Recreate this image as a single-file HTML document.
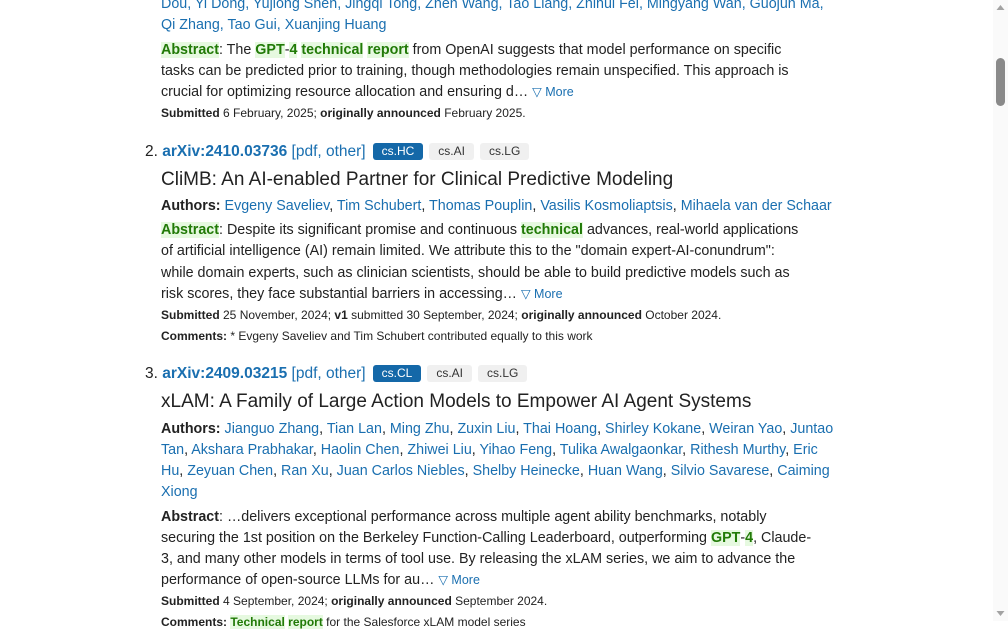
<!DOCTYPE html>
<html><head><meta charset="utf-8"><style>
html,body{margin:0;padding:0;width:1008px;height:621px;overflow:hidden;background:#fff;font-family:"Liberation Sans",sans-serif;color:#222}
.l{position:absolute;left:161px;white-space:nowrap;font-size:14.3px;line-height:21px;height:21px}
a{color:#1a6fb0;text-decoration:none}
.s{font-size:12px}
.h{background:#e6f9e0;color:#217a07;font-weight:bold}
.g{color:#217a07;font-weight:bold;background:#e6f9e0}
.more{font-size:12.5px;color:#1a6fb0}
.t{font-size:19px;color:#222;line-height:26px;height:26px}
.n{position:absolute;left:145px;font-size:15.5px;line-height:21px}
.id{font-size:15.5px;color:#1a6fb0}
.tag{display:inline-block;font-size:12px;line-height:17px;padding:0 9px;border-radius:3px;margin-left:6px;vertical-align:1px;background:#f0f0f0;color:#333}
.tag.p{background:#1468a8;color:#fff;margin-left:7px}
.sb{position:absolute;left:993px;top:0;width:15px;height:621px;background:#fafafa}
</style></head><body>
<div class="l" style="top:-6px"><a>Dou, Yi Dong, Yujiong Shen, Jingqi Tong, Zhen Wang, Tao Liang, Zhihui Fei, Mingyang Wan, Guojun Ma,</a></div>
<div class="l" style="top:15px"><a>Qi Zhang, Tao Gui, Xuanjing Huang</a></div>
<div class="l" style="top:40px"><span class="h">Abstract</span>: The <span class="g">GPT</span>-<span class="g">4</span> <span class="g">technical</span> <span class="g">report</span> from OpenAI suggests that model performance on specific</div>
<div class="l" style="top:61px">tasks can be predicted prior to training, though methodologies remain unspecified. This approach is</div>
<div class="l" style="top:82px">crucial for optimizing resource allocation and ensuring d… <span class="more">▽ More</span></div>
<div class="l s" style="top:103px"><b>Submitted</b> 6 February, 2025; <b>originally announced</b> February 2025.</div>

<div class="n" style="top:141px">2. <a class="id" style="font-weight:bold">arXiv:2410.03736</a> <a>[pdf, other]</a><span class="tag p">cs.HC</span><span class="tag">cs.AI</span><span class="tag">cs.LG</span></div>
<div class="l t" style="top:167px">CliMB: An AI-enabled Partner for Clinical Predictive Modeling</div>
<div class="l" style="top:196px"><b>Authors:</b> <a>Evgeny Saveliev</a>, <a>Tim Schubert</a>, <a>Thomas Pouplin</a>, <a>Vasilis Kosmoliaptsis</a>, <a>Mihaela van der Schaar</a></div>
<div class="l" style="top:220px"><span class="h">Abstract</span>: Despite its significant promise and continuous <span class="g">technical</span> advances, real-world applications</div>
<div class="l" style="top:241px">of artificial intelligence (AI) remain limited. We attribute this to the "domain expert-AI-conundrum":</div>
<div class="l" style="top:263px">while domain experts, such as clinician scientists, should be able to build predictive models such as</div>
<div class="l" style="top:284px">risk scores, they face substantial barriers in accessing… <span class="more">▽ More</span></div>
<div class="l s" style="top:305px"><b>Submitted</b> 25 November, 2024; <b>v1</b> submitted 30 September, 2024; <b>originally announced</b> October 2024.</div>
<div class="l s" style="top:326px"><b>Comments:</b> * Evgeny Saveliev and Tim Schubert contributed equally to this work</div>

<div class="n" style="top:363px">3. <a class="id" style="font-weight:bold">arXiv:2409.03215</a> <a>[pdf, other]</a><span class="tag p">cs.CL</span><span class="tag">cs.AI</span><span class="tag">cs.LG</span></div>
<div class="l t" style="top:389px">xLAM: A Family of Large Action Models to Empower AI Agent Systems</div>
<div class="l" style="top:419px"><b>Authors:</b> <a>Jianguo Zhang</a>, <a>Tian Lan</a>, <a>Ming Zhu</a>, <a>Zuxin Liu</a>, <a>Thai Hoang</a>, <a>Shirley Kokane</a>, <a>Weiran Yao</a>, <a>Juntao</a></div>
<div class="l" style="top:440px"><a>Tan</a>, <a>Akshara Prabhakar</a>, <a>Haolin Chen</a>, <a>Zhiwei Liu</a>, <a>Yihao Feng</a>, <a>Tulika Awalgaonkar</a>, <a>Rithesh Murthy</a>, <a>Eric</a></div>
<div class="l" style="top:461px"><a>Hu</a>, <a>Zeyuan Chen</a>, <a>Ran Xu</a>, <a>Juan Carlos Niebles</a>, <a>Shelby Heinecke</a>, <a>Huan Wang</a>, <a>Silvio Savarese</a>, <a>Caiming</a></div>
<div class="l" style="top:482px"><a>Xiong</a></div>
<div class="l" style="top:507px"><b>Abstract</b>: …delivers exceptional performance across multiple agent ability benchmarks, notably</div>
<div class="l" style="top:528px">securing the 1st position on the Berkeley Function-Calling Leaderboard, outperforming <span class="g">GPT</span>-<span class="g">4</span>, Claude-</div>
<div class="l" style="top:549px">3, and many other models in terms of tool use. By releasing the xLAM series, we aim to advance the</div>
<div class="l" style="top:570px">performance of open-source LLMs for au… <span class="more">▽ More</span></div>
<div class="l s" style="top:591px"><b>Submitted</b> 4 September, 2024; <b>originally announced</b> September 2024.</div>
<div class="l s" style="top:612px"><b>Comments:</b> <span class="g">Technical</span> <span class="g">report</span> for the Salesforce xLAM model series</div>

<div class="sb">
<svg width="15" height="621" style="position:absolute;left:0;top:0">
<polygon points="3.5,10 7.5,5 11.5,10" fill="#a3a3a3"/>
<rect x="3" y="58" width="9" height="48" rx="4.5" fill="#8a8a8a"/>
<polygon points="3.5,611 7.5,616 11.5,611" fill="#a3a3a3"/>
</svg></div>
</body></html>
